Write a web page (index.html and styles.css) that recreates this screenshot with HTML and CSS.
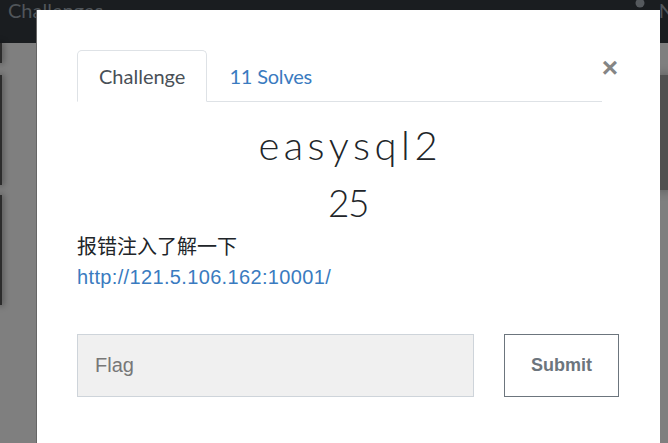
FILE: index.html
```html
<!DOCTYPE html>
<html lang="zh">
<head>
<meta charset="utf-8">
<title>easysql2</title>
<link rel="stylesheet" href="styles.css">
</head>
<body>
<div class="page">
  <header class="navbar">
    <span class="brand">Challenges</span>
    <span class="user">
      <svg class="user-icon" width="12" height="12" viewBox="0 0 12 12"><circle cx="6" cy="4" r="4.5" fill="#55595d"/></svg>
      <span class="user-name">N</span>
    </span>
  </header>
  <div class="board">
    <div class="col col-left">
      <div class="card card-stub"></div>
      <div class="card card-tall"></div>
      <div class="card card-tall"></div>
    </div>
    <div class="col col-right">
      <div class="card card-right"></div>
    </div>
  </div>
</div>

<div class="modal">
  <button class="close" aria-label="Close">&times;</button>
  <div class="modal-body">
    <ul class="tabs">
      <li class="tab active">Challenge</li>
      <li class="tab link">11 Solves</li>
    </ul>
    <h2 class="chal-name">easysql2</h2>
    <h3 class="chal-value">25</h3>
    <div class="desc">
      <p class="desc-text">报错注入了解一下</p>
      <a class="desc-link" href="#">http://121.5.106.162:10001/</a>
    </div>
    <form class="flag-row">
      <input class="flag-input" type="text" placeholder="Flag">
      <button class="submit" type="button">Submit</button>
    </form>
  </div>
</div>
</body>
</html>
```

FILE: styles.css
```css
html, body {
  margin: 0;
  padding: 0;
  width: 668px;
  height: 443px;
  overflow: hidden;
  background: #7f7f7f;
  font-family: Lato, "Liberation Sans", "Noto Sans CJK SC", sans-serif;
}
.page {
  position: relative;
  height: 443px;
}
.navbar {
  height: 43px;
  background: #1a1d20;
  display: flex;
  justify-content: space-between;
  align-items: flex-start;
  padding: 0 0 0 8px;
  box-sizing: border-box;
}
.brand {
  color: #50555a;
  font-size: 20px;
  line-height: 24px;
  margin-top: -2px;
}
.user {
  display: flex;
  align-items: flex-start;
  gap: 13px;
  margin-right: -6px;
}
.user-icon { margin-top: -1px; }
.user-name {
  color: #50555a;
  font-size: 20px;
  line-height: 24px;
  margin-top: -2px;
}
.board {
  display: flex;
  justify-content: space-between;
}
.col {
  display: flex;
  flex-direction: column;
}
.col-left { width: 2px; }
.col-right { width: 8px; padding-top: 32px; }
.card {
  background: #2c2c2c;
  box-shadow: 0 0 6px 1px rgba(0,0,0,0.45);
}
.card-stub { height: 20px; margin-bottom: 12px; }
.card-tall { height: 110px; margin-bottom: 10px; }
.card-right { height: 115px; background: #505050; box-shadow: 0 0 8px 2px rgba(0,0,0,0.25); }

.modal {
  position: absolute;
  left: 36px;
  top: 10px;
  width: 624px;
  height: 460px;
  background: #fff;
  border-left: 1px solid #666;
  box-sizing: border-box;
}
.close {
  position: absolute;
  right: 42px;
  top: 44px;
  border: 0;
  background: none;
  padding: 0;
  font-family: "Liberation Sans", sans-serif;
  font-weight: bold;
  font-size: 28px;
  line-height: 1;
  color: #858585;
}
.modal-body {
  padding: 40px 41px 0 40px;
}
.tabs {
  list-style: none;
  margin: 0 17px 0 0;
  padding: 0;
  display: flex;
  border-bottom: 1px solid #dee2e6;
}
.tab {
  font-size: 20px;
  line-height: 30px;
  padding: 10px 21px;
  border: 1px solid transparent;
  border-radius: 5px 5px 0 0;
  margin-bottom: -1px;
}
.tab.active {
  color: #495057;
  border-color: #dee2e6 #dee2e6 #fff;
}
.tab.link { color: #3a7bc0; letter-spacing: -0.2px; }
.chal-name {
  margin: 20px 0 0;
  padding-left: 4.5px;
  text-align: center;
  font-weight: 300;
  font-size: 40px;
  letter-spacing: 4.5px;
  line-height: 46px;
  color: #212529;
}
.chal-value {
  margin: 13px 0 0;
  text-align: center;
  font-weight: 300;
  font-size: 37px;
  letter-spacing: -1.5px;
  line-height: 44px;
  color: #212529;
}
.desc {
  margin-top: 7px;
  font-family: "Liberation Sans", "Noto Sans CJK SC", sans-serif;
  font-size: 20px;
  line-height: 30px;
}
.desc-text {
  margin: 0;
  color: #212529;
}
.desc-link {
  color: #3a7bc0;
  letter-spacing: 0.35px;
  text-decoration: none;
}
.flag-row {
  display: flex;
  gap: 30px;
  margin-top: 42px;
}
.flag-input {
  width: 397px;
  height: 63px;
  box-sizing: border-box;
  background: #f0f0f0;
  border: 1px solid #ced4da;
  padding: 0 17px;
  font-family: "Liberation Sans", sans-serif;
  font-size: 20px;
  color: #495057;
  outline: none;
}
.flag-input::placeholder { color: #777; }
.submit {
  width: 115px;
  height: 63px;
  box-sizing: border-box;
  background: #fff;
  border: 1px solid #6c757d;
  font-family: "Liberation Sans", sans-serif;
  font-weight: bold;
  font-size: 18px;
  color: #6c757d;
  padding: 0;
}
```
